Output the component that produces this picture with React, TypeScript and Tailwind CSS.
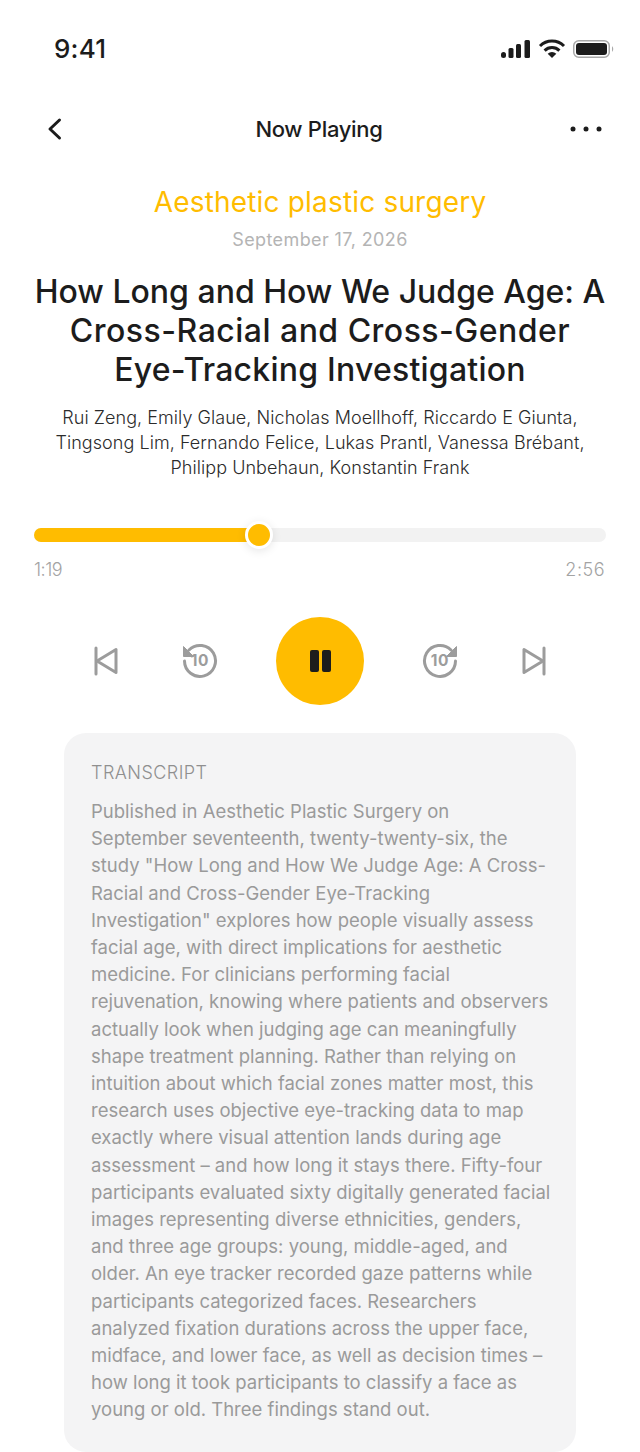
const font = "[font-family:Inter,'Noto_Sans',sans-serif]";

const authors = [
  "Rui Zeng, Emily Glaue, Nicholas Moellhoff, Riccardo E Giunta,",
  "Tingsong Lim, Fernando Felice, Lukas Prantl, Vanessa Brébant,",
  "Philipp Unbehaun, Konstantin Frank",
];

const transcript = [
  "Published in Aesthetic Plastic Surgery on",
  "September seventeenth, twenty-twenty-six, the",
  "study \"How Long and How We Judge Age: A Cross-",
  "Racial and Cross-Gender Eye-Tracking",
  "Investigation\" explores how people visually assess",
  "facial age, with direct implications for aesthetic",
  "medicine. For clinicians performing facial",
  "rejuvenation, knowing where patients and observers",
  "actually look when judging age can meaningfully",
  "shape treatment planning. Rather than relying on",
  "intuition about which facial zones matter most, this",
  "research uses objective eye-tracking data to map",
  "exactly where visual attention lands during age",
  "assessment – and how long it stays there. Fifty-four",
  "participants evaluated sixty digitally generated facial",
  "images representing diverse ethnicities, genders,",
  "and three age groups: young, middle-aged, and",
  "older. An eye tracker recorded gaze patterns while",
  "participants categorized faces. Researchers",
  "analyzed fixation durations across the upper face,",
  "midface, and lower face, as well as decision times –",
  "how long it took participants to classify a face as",
  "young or old. Three findings stand out.",
];

function Replay({ flip }: { flip?: boolean }) {
  return (
    <div className="relative w-[36px] h-[36px] flex items-center justify-center">
      <svg width="36" height="36" viewBox="0 0 36 36" fill="none" className={flip ? "absolute inset-0 -scale-x-100" : "absolute inset-0"}>
        <path d="M7 7 A15.5 15.5 0 1 1 2.5 18" stroke="#9c9c9c" strokeWidth="3" strokeLinecap="round" />
        <path d="M1.5 3.5 L1.5 13.5 L11.5 13.5 Z" fill="#9c9c9c" stroke="#9c9c9c" strokeLinejoin="round" />
      </svg>
      <span className="relative text-[15.5px] leading-none font-bold text-[#9c9c9c] tracking-[0.8px]">10</span>
    </div>
  );
}

function Skip({ flip }: { flip?: boolean }) {
  return (
    <svg width="24" height="30" viewBox="0 0 24 30" fill="none" className={flip ? "-scale-x-100" : ""}>
      <path d="M2 2 V28" stroke="#9c9c9c" strokeWidth="3" strokeLinecap="round" />
      <path d="M22 3.5 V26.5 L3 15 Z" stroke="#9c9c9c" strokeWidth="3" strokeLinejoin="round" />
    </svg>
  );
}

export default function App() {
  return (
    <div className={`w-[640px] h-[1452px] overflow-hidden bg-white flex flex-col ${font}`}>
      <div className="h-[44px] mt-[26px] pl-[54px] pr-[24px] flex items-center justify-between">
        <span className="text-[26px] leading-none font-medium text-[#1c1c1c] tracking-[0.2px] translate-y-[1px]">9:41</span>
        <svg width="116" height="24" viewBox="0 0 116 24" fill="none">
          <rect x="1" y="16" width="5" height="6" rx="2.5" fill="#1c1c1c" />
          <rect x="8.5" y="12" width="5" height="10" rx="1.5" fill="#1c1c1c" />
          <rect x="16" y="8" width="5" height="14" rx="1.5" fill="#1c1c1c" />
          <rect x="24.5" y="4" width="5.5" height="18" rx="1.5" fill="#1c1c1c" />
          <path d="M52 22 L47.7 17.7 A6 6 0 0 1 56.3 17.7 Z" fill="#1c1c1c" />
          <path d="M44.6 14.6 A10.5 10.5 0 0 1 59.4 14.6" stroke="#1c1c1c" strokeWidth="3" />
          <path d="M40 10 A17 17 0 0 1 64 10" stroke="#1c1c1c" strokeWidth="3" />
          <rect x="73.75" y="4.75" width="35.5" height="16.5" rx="5" stroke="#a8a8a8" strokeWidth="1.5" />
          <rect x="76" y="7" width="31" height="12" rx="3" fill="#1c1c1c" />
          <path d="M112 10 q2.5 3 0 6Z" fill="#a8a8a8" />
        </svg>
      </div>

      <div className="mt-[44px] h-[30px] pl-[46px] pr-[38px] flex items-center justify-between">
        <svg width="22" height="24" viewBox="0 0 22 24" fill="none">
          <path d="M13.5 3 L4 12 L13.5 21" stroke="#1c1c1c" strokeWidth="3" strokeLinecap="round" strokeLinejoin="round" />
        </svg>
        <span className="text-[22px] leading-[30px] font-medium text-[#1c1c1c] tracking-[-0.3px]">Now Playing</span>
        <svg width="32" height="6" viewBox="0 0 32 6">
          <circle cx="3" cy="3" r="2.5" fill="#1c1c1c" />
          <circle cx="16" cy="3" r="2.5" fill="#1c1c1c" />
          <circle cx="29" cy="3" r="2.5" fill="#1c1c1c" />
        </svg>
      </div>

      <div className="mt-[42px] text-center text-[28px] leading-[32px] text-[#ffbc00] tracking-[0.18px]">Aesthetic plastic surgery</div>
      <div className="mt-[10px] text-center text-[18px] leading-[24px] text-[#b4b4b4] tracking-[0.4px]">September 17, 2026</div>
      <h1 className="mt-[20px] text-center text-[32px] leading-[39px] font-medium text-[#1c1c1c] whitespace-nowrap">
        <div>How Long and How We Judge Age: A</div>
        <div className="tracking-[0.48px]">Cross-Racial and Cross-Gender</div>
        <div className="tracking-[0.23px]">Eye-Tracking Investigation</div>
      </h1>
      <div className="mt-[16px] text-center text-[18px] leading-[25px] font-light text-[#2b2b2b] tracking-[0.05px]">
        {authors.map((a) => <div key={a} className="whitespace-nowrap">{a}</div>)}
      </div>

      <div className="mt-[48px] mx-[34px] h-[14px] rounded-full bg-[#f2f2f2] relative">
        <div className="w-[226px] h-full rounded-full bg-[#ffbc00]" />
        <div className="absolute left-[211px] top-[-7px] w-[28px] h-[28px] rounded-full bg-[#ffbc00] border-[3px] border-white shadow-[0_2px_10px_rgba(0,0,0,0.1)]" />
      </div>
      <div className="mt-[16px] ml-[34px] mr-[35px] flex justify-between text-[18px] leading-[24px] font-light text-[#a3a3a3]">
        <span className="tracking-[-0.5px]">1:19</span><span className="tracking-[0.5px]">2:56</span>
      </div>

      <div className="mt-[35px] flex items-center justify-center">
        <Skip />
        <div className="ml-[64px]"><Replay /></div>
        <div className="mx-[58px] w-[88px] h-[88px] rounded-full bg-[#ffbc00] flex items-center justify-center gap-[3px]">
          <span className="w-[9px] h-[22px] rounded-[2px] bg-[#1c1c1c]" />
          <span className="w-[9px] h-[22px] rounded-[2px] bg-[#1c1c1c]" />
        </div>
        <div className="mr-[64px]"><Replay flip /></div>
        <Skip flip />
      </div>

      <div className="mt-[28px] mx-[64px] rounded-[22px] bg-[#f4f4f5] pl-[27px] pt-[26px] h-[719px]">
        <div className="text-[18px] leading-[27px] text-[#8f8f8f] font-light tracking-[0.45px]">TRANSCRIPT</div>
        <div className="mt-[12px] text-[18.5px] leading-[27.2px] text-[#9a9a9a]">
          {transcript.map((t) => <div key={t} className="whitespace-nowrap">{t}</div>)}
        </div>
      </div>
    </div>
  );
}
